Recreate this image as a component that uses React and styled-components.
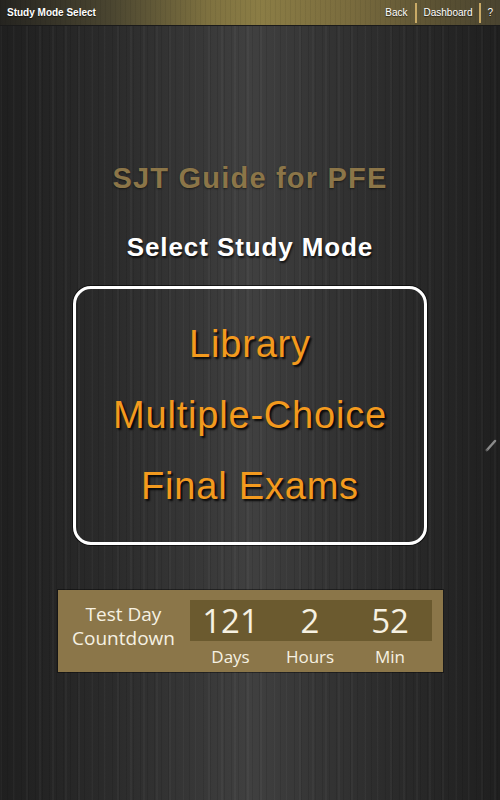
import React from 'react';
import styled, { createGlobalStyle } from 'styled-components';

const GlobalStyle = createGlobalStyle`
  html, body {
    margin: 0;
    padding: 0;
    background: #222;
  }
  * { box-sizing: border-box; }
`;

const Screen = styled.div`
  position: relative;
  width: 500px;
  height: 800px;
  overflow: hidden;
  font-family: "Liberation Sans", Arial, sans-serif;
  background:
    repeating-linear-gradient(90deg, rgba(0,0,0,0.10) 0 1px, transparent 1px 7px),
    repeating-linear-gradient(90deg, rgba(255,255,255,0.03) 0 2px, transparent 2px 13px),
    linear-gradient(90deg, #1f1f1f 0%, #2b2b2b 22%, #363636 38%, #404040 50%, #363636 62%, #2b2b2b 78%, #1f1f1f 100%);
  display: flex;
  flex-direction: column;
  align-items: center;
`;

const TopBar = styled.div`
  width: 100%;
  height: 26px;
  flex-shrink: 0;
  display: flex;
  align-items: center;
  justify-content: space-between;
  padding: 0 1px 0 7px;
  background:
    repeating-linear-gradient(90deg, rgba(0,0,0,0.06) 0 1px, transparent 1px 5px),
    linear-gradient(90deg, #252420 0%, #4a4530 22%, #7f7240 42%, #8b7d45 52%, #7a6c3e 70%, #5a5133 88%, #4a4430 100%);
  border-bottom: 1px solid #1a1a1a;
  color: #fff;
  text-shadow: 0 1px 1px rgba(0,0,0,0.6);
`;

const BarTitle = styled.div`
  font-size: 10px;
  font-weight: bold;
`;

const BarNav = styled.div`
  display: flex;
  align-items: center;
  font-size: 10px;
`;

const NavLink = styled.span`
  padding: 0 ${p => p.$pad || 7}px;
`;

const NavSep = styled.span`
  width: 2px;
  height: 20px;
  background: #c9aa66;
`;

const Title = styled.h1`
  margin: 136px 0 0;
  font-size: 29px;
  line-height: 32px;
  letter-spacing: 1.2px;
  font-weight: bold;
  color: #8b7548;
  text-shadow: 0 1px 2px rgba(0,0,0,0.5);
`;

const Subtitle = styled.h2`
  margin: 38px 0 0;
  font-size: 26px;
  line-height: 30px;
  letter-spacing: 0.9px;
  font-weight: bold;
  color: #fff;
  text-shadow: 1px 2px 2px rgba(0,0,0,0.7);
`;

const ModeBox = styled.div`
  margin-top: 24px;
  width: 354px;
  height: 259px;
  border: 3px solid #fff;
  border-radius: 18px;
  box-shadow: 0 0 0 1px rgba(0,0,0,0.6);
  padding: 20px 0;
  display: flex;
  flex-direction: column;
  align-items: center;
`;

const ModeItem = styled.div`
  font-size: 38px;
  line-height: 71px;
  letter-spacing: 0.8px;
  color: #f39a1e;
  text-shadow: 2px 2px 2px rgba(0,0,0,0.85);
  cursor: pointer;
`;

const Countdown = styled.div`
  margin-top: 45px;
  width: 385px;
  height: 82px;
  background: #8b7649;
  box-shadow: 0 0 0 1px rgba(0,0,0,0.4);
  padding: 10px 11px 0 0;
  display: flex;
  font-family: "Open Sans", "DejaVu Sans", sans-serif;
  color: #f6f1e2;
`;

const CountLabel = styled.div`
  width: 132px;
  font-size: 19px;
  line-height: 24px;
  text-align: center;
  padding-top: 2px;
`;

const CountBody = styled.div`
  flex: 1;
  display: flex;
  flex-direction: column;
`;

const CountPanel = styled.div`
  height: 41px;
  background: #6b5a2f;
  display: grid;
  grid-template-columns: 82px 77px 1fr;
  align-items: center;
`;

const CountUnits = styled.div`
  display: grid;
  grid-template-columns: 82px 77px 1fr;
`;

const Number = styled.div`
  font-size: 33px;
  line-height: 41px;
  text-align: center;
`;

const Unit = styled.div`
  font-size: 17px;
  line-height: 32px;
  text-align: center;
`;

const PenMark = styled.svg`
  position: absolute;
  right: 3px;
  top: 438px;
`;

export default function App() {
  return (
    <>
      <GlobalStyle />
      <Screen>
        <TopBar>
          <BarTitle>Study Mode Select</BarTitle>
          <BarNav>
            <NavLink>Back</NavLink>
            <NavSep />
            <NavLink>Dashboard</NavLink>
            <NavSep />
            <NavLink $pad={6}>?</NavLink>
          </BarNav>
        </TopBar>

        <Title>SJT Guide for PFE</Title>
        <Subtitle>Select Study Mode</Subtitle>

        <ModeBox>
          <ModeItem>Library</ModeItem>
          <ModeItem>Multiple-Choice</ModeItem>
          <ModeItem>Final Exams</ModeItem>
        </ModeBox>

        <Countdown>
          <CountLabel>Test Day<br />Countdown</CountLabel>
          <CountBody>
            <CountPanel>
              <Number>121</Number>
              <Number>2</Number>
              <Number>52</Number>
            </CountPanel>
            <CountUnits>
              <Unit>Days</Unit>
              <Unit>Hours</Unit>
              <Unit>Min</Unit>
            </CountUnits>
          </CountBody>
        </Countdown>

        <PenMark width="12" height="14" viewBox="0 0 12 14">
          <path d="M2 12 L10 3" stroke="#8a8a8a" strokeWidth="2.5" strokeLinecap="round" />
          <path d="M1 13 L2.5 11.5" stroke="#5a5a5a" strokeWidth="1.5" />
        </PenMark>
      </Screen>
    </>
  );
}
